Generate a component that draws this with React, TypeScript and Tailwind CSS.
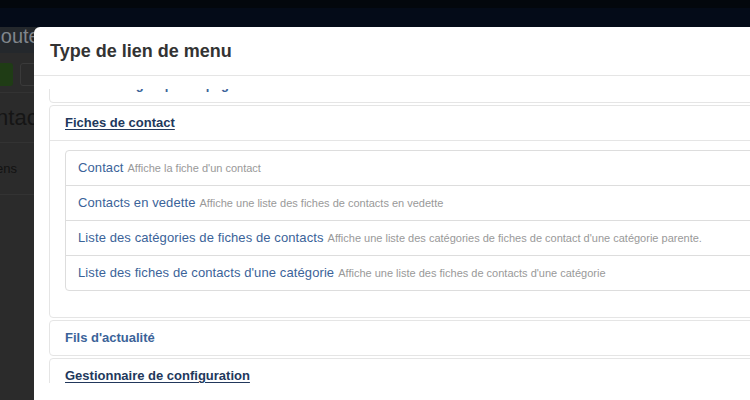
import React from "react";

const items = [
  { t: "Contact", d: "Affiche la fiche d'un contact" },
  { t: "Contacts en vedette", d: "Affiche une liste des fiches de contacts en vedette" },
  {
    t: "Liste des catégories de fiches de contacts",
    d: "Affiche une liste des catégories de fiches de contact d'une catégorie parente.",
  },
  { t: "Liste des fiches de contacts d'une catégorie", d: "Affiche une liste des fiches de contacts d'une catégorie" },
];

export default function App() {
  return (
    <div
      className="relative w-[750px] h-[400px] overflow-hidden bg-[#2b2b2b]"
      style={{ fontFamily: '"Liberation Sans", Arial, sans-serif' }}
    >
      {/* background page (dimmed) */}
      <div className="flex flex-col">
        <div className="h-[8px] bg-[#03070c]" />
        <div className="h-[19px] bg-[#040b18]" />
        <div className="h-[26px] bg-[#24282c] overflow-visible">
          <div className="-mt-[3px] -ml-[17px] text-[20px] leading-[24px] text-[#80868c] whitespace-nowrap">
            Ajouter
          </div>
        </div>
        <div className="h-[40px] flex items-start gap-[7px] pt-[10px] border-b border-[#333333]">
          <div className="w-[13px] h-[23px] bg-[#1f3c15] rounded-r-[3px]" />
          <div className="w-[20px] h-[23px] bg-[#2b2b2b] border border-[#3a3a3a] rounded-[3px]" />
        </div>
        <div className="h-[50px] flex items-center border-b border-[#333333]">
          <div className="-ml-[32px] text-[22px] text-[#151515] whitespace-nowrap">Contacts</div>
        </div>
        <div className="h-[52px] flex items-center border-b border-[#333333]">
          <div className="-ml-[14px] text-[13px] text-[#121212] whitespace-nowrap">Liens</div>
        </div>
      </div>

      {/* modal */}
      <div className="absolute left-[34px] top-[27px] w-[760px] h-[400px] bg-white rounded-tl-[6px] flex flex-col">
        <div className="h-[49px] shrink-0 border-b border-[#e5e5e5] flex items-center pl-[16px]">
          <h3 className="text-[18px] font-bold text-[#333333] leading-none">Type de lien de menu</h3>
        </div>
        <div className="pt-[13px] pl-[15px] pr-[15px]">
          <div className="h-[294px] overflow-hidden">
            <div className="-mt-[22px] flex flex-col gap-[2px] text-[13px]">
              <div className="border border-[#e5e5e5] rounded-[4px]">
                <div className="h-[34px] flex items-center px-[15px]">
                  <span className="font-bold text-[#3b6399]">Gestion de groupes et pages</span>
                </div>
              </div>

              <div className="border border-[#e5e5e5] rounded-[4px]">
                <div className="h-[34px] flex items-center px-[15px]">
                  <span className="font-bold text-[#22385c] underline underline-offset-2">Fiches de contact</span>
                </div>
                <div className="border-t border-[#e5e5e5] pt-[9px] pb-[9px] px-[15px]">
                  <div className="border border-[#dddddd] rounded-[4px] mb-[17px]">
                    {items.map((it, i) => (
                      <div
                        key={i}
                        className={
                          "h-[34px] flex items-center pl-[12px] whitespace-nowrap " +
                          (i < items.length - 1 ? "border-b border-[#dddddd] h-[35px]" : "")
                        }
                      >
                        <span className="text-[13px] tracking-[0.1px] text-[#3b6399]">{it.t}</span>
                        <span className="ml-[4px] text-[11px] text-[#999999]">{it.d}</span>
                      </div>
                    ))}
                  </div>
                </div>
              </div>

              <div className="border border-[#e5e5e5] rounded-[4px]">
                <div className="h-[34px] flex items-center px-[15px]">
                  <span className="font-bold text-[#3b6399]">Fils d'actualité</span>
                </div>
              </div>

              <div className="border border-[#e5e5e5] rounded-[4px]">
                <div className="h-[34px] flex items-center px-[15px]">
                  <span className="font-bold text-[#22385c] underline underline-offset-2">
                    Gestionnaire de configuration
                  </span>
                </div>
              </div>
            </div>
          </div>
        </div>
      </div>
    </div>
  );
}
